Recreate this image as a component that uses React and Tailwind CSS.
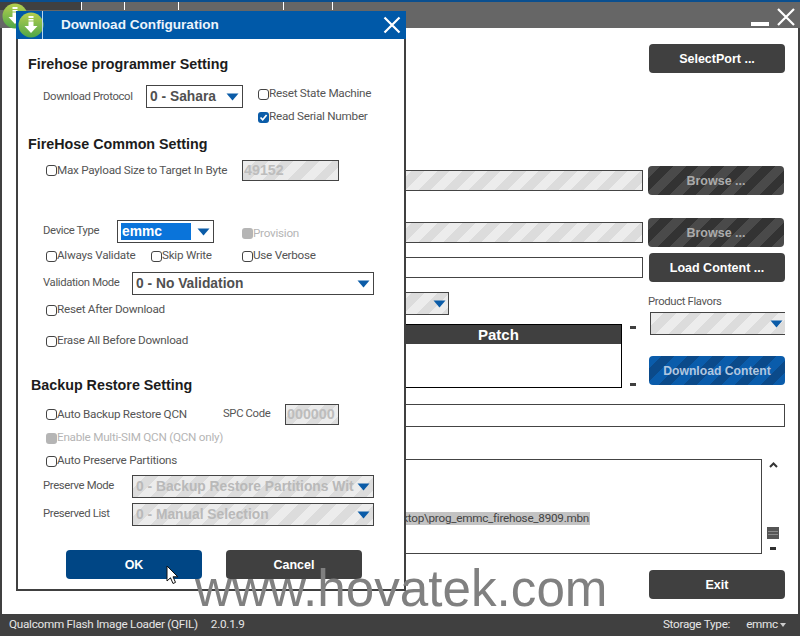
const font = "font-['Liberation_Sans',Arial,sans-serif]";
const small = "font-['Roboto','Liberation_Sans',sans-serif] text-[11.7px] tracking-[-0.25px]";
const narrow = "font-['Roboto','Liberation_Sans',sans-serif] text-[11.3px] tracking-[-0.35px]";

const stripes =
  "bg-[repeating-linear-gradient(135deg,#ececec_0px,#ececec_9px,#dcdcdc_9px,#dcdcdc_18px)]";

function Arrow({ className = "" }) {
  return (
    <svg width="13" height="8" viewBox="0 0 13 8" className={className}>
      <path d="M0.5 0.5H12.5L6.5 7.5Z" fill="#0b5ca8" />
    </svg>
  );
}

function AppIcon({ className = "" }) {
  return (
    <svg width="26" height="26" viewBox="0 0 26 26" className={className}>
      <defs>
        <linearGradient id="ga" x1="0" y1="0" x2="0" y2="1">
          <stop offset="0" stopColor="#b5cf4e" />
          <stop offset="1" stopColor="#4ea648" />
        </linearGradient>
      </defs>
      <circle cx="13" cy="13" r="12.5" fill="url(#ga)" />
      <path d="M10.5 4h5v2h-5zM10.5 7h5v1.5h-5zM10.5 9.5h5V14h4l-6.5 7-6.5-7h4z" fill="#ffffff" />
    </svg>
  );
}

function Check({ label, checked, disabled, className = "" }) {
  return (
    <div className={`flex h-4 items-center ${small} ${disabled ? "text-[#b5b5b5]" : "text-[#555555]"} ${className}`}>
      {checked ? (
        <span className="flex h-[11px] w-[11px] shrink-0 items-center justify-center rounded-[3px] bg-[#0b5ca8]">
          <svg width="9" height="9" viewBox="0 0 9 9">
            <path d="M1.5 4.5L3.7 6.8L7.6 2" fill="none" stroke="#ffffff" strokeWidth="1.7" />
          </svg>
        </span>
      ) : disabled ? (
        <span className="h-[11px] w-[11px] shrink-0 rounded-[3px] bg-[#b5b5b5]" />
      ) : (
        <span className="h-[11px] w-[11px] shrink-0 rounded-[3px] border border-[#444444] bg-white" />
      )}
      <span className="whitespace-nowrap">{label}</span>
    </div>
  );
}

function Heading({ children, className = "" }) {
  return <div className={`h-5 text-[14.3px] font-bold leading-5 text-[#1c1c1c] ${className}`}>{children}</div>;
}

function Label({ children, className = "" }) {
  return <div className={`whitespace-nowrap text-[#555555] ${narrow} ${className}`}>{children}</div>;
}

function Combo({ value, disabled, widthClass, highlight }) {
  return (
    <div
      className={`flex h-[23px] shrink-0 items-center border border-[#444444] pl-[3px] ${widthClass} ${disabled ? stripes : "bg-white"}`}
    >
      <div
        className={`flex-1 overflow-hidden whitespace-nowrap text-[13.8px] font-bold ${
          highlight ? "mr-[3px] h-[17px] bg-[#0a74da] pl-[1px] leading-[18px] text-white" : disabled ? "pt-[1px] text-[#b9b9b9]" : "pt-[1px] text-[#505050]"
        }`}
      >
        {value}
      </div>
      <Arrow className="mx-[3px] shrink-0" />
    </div>
  );
}

function Btn({ children, className = "", disabled }) {
  return (
    <div
      className={`flex h-[29px] w-[136px] shrink-0 items-center justify-center rounded-[4px] pt-[1px] text-[12.5px] font-bold ${
        disabled ? "text-[#ababab]" : "text-white"
      } ${className}`}
    >
      {children}
    </div>
  );
}

const darkStripes =
  "bg-[repeating-linear-gradient(135deg,#4a4a4a_0px,#4a4a4a_9px,#333333_9px,#333333_18px)]";

function Dialog() {
  return (
    <div className="absolute left-[16px] top-[11px] flex h-[580px] w-[390px] flex-col border-x-2 border-b-2 border-[#404040] bg-white">
      <div className="-mx-[2px] flex h-[28px] shrink-0 items-center bg-[#0059a8]">
        <AppIcon className="ml-[2px] shrink-0" />
        <div className="ml-[-2px] h-full w-[1px] bg-[#bcd7ef]" />
        <div className="ml-[18px] flex-1 text-[13.6px] font-bold text-[#ecf4fb]">Download Configuration</div>
        <svg width="18" height="18" viewBox="0 0 18 18" className="mr-[5px]">
          <path d="M1.5 1.5L16.5 16.5M16.5 1.5L1.5 16.5" stroke="#ffffff" strokeWidth="2.2" />
        </svg>
      </div>

      <Heading className="ml-[10px] mt-[15px]">Firehose programmer Setting</Heading>

      <div className="ml-[25px] mt-[11px] flex h-[41px] shrink-0 items-start">
        <Label className="w-[103px] pt-[4px]">Download Protocol</Label>
        <Combo value="0 - Sahara" widthClass="w-[97px]" />
        <div className="ml-[15px] flex flex-col gap-[7px] pt-[1px]">
          <Check label="Reset State Machine" />
          <Check label="Read Serial Number" checked />
        </div>
      </div>

      <Heading className="ml-[10px] mt-[8px]">FireHose Common Setting</Heading>

      <div className="ml-[28px] mt-[6px] flex h-[21px] shrink-0 items-center">
        <Check label="Max Payload Size to Target In Byte" className="w-[196px]" />
        <div className={`flex h-[21px] w-[97px] items-center border border-[#444444] pl-[1px] pt-[1px] text-[14.3px] font-bold text-[#bdbdbd] ${stripes}`}>
          49152
        </div>
      </div>

      <div className="ml-[25px] mt-[39px] flex h-[23px] shrink-0 items-center">
        <Label className="w-[74px]">Device Type</Label>
        <Combo value="emmc" widthClass="w-[97px]" highlight />
        <Check label="Provision" disabled className="ml-[28px] mt-[4px]" />
      </div>

      <div className="ml-[28px] mt-[5px] flex h-4 shrink-0 items-center">
        <Check label="Always Validate" className="w-[105px]" />
        <Check label="Skip Write" className="w-[91px]" />
        <Check label="Use Verbose" />
      </div>

      <div className="ml-[25px] mt-[8px] flex h-[23px] shrink-0 items-center">
        <Label className="w-[89px]">Validation Mode</Label>
        <Combo value="0 - No Validation" widthClass="w-[242px]" />
      </div>

      <Check label="Reset After Download" className="ml-[28px] mt-[7px] shrink-0" />
      <Check label="Erase All Before Download" className="ml-[28px] mt-[15px] shrink-0" />

      <Heading className="ml-[13px] mt-[26px]">Backup Restore Setting</Heading>

      <div className="ml-[28px] mt-[9px] flex h-[21px] shrink-0 items-center">
        <Check label="Auto Backup Restore QCN" className="w-[177px]" />
        <Label className="w-[62px]">SPC Code</Label>
        <div className={`flex h-[21px] w-[54px] items-center border border-[#444444] pl-[1px] pt-[1px] text-[14.3px] font-bold text-[#bdbdbd] ${stripes}`}>
          000000
        </div>
      </div>

      <Check label="Enable Multi-SIM QCN (QCN only)" disabled className="ml-[28px] mt-[5px] shrink-0" />
      <Check label="Auto Preserve Partitions" className="ml-[28px] mt-[7px] shrink-0" />

      <div className="ml-[25px] mt-[6px] flex h-[23px] shrink-0 items-center">
        <Label className="w-[89px]">Preserve Mode</Label>
        <Combo value="0 - Backup Restore Partitions With" widthClass="w-[242px]" disabled />
      </div>
      <div className="ml-[25px] mt-[5px] flex h-[23px] shrink-0 items-center">
        <Label className="w-[89px]">Preserved List</Label>
        <Combo value="0 - Manual Selection" widthClass="w-[242px]" disabled />
      </div>

      <div className="ml-[48px] mt-[24px] flex shrink-0 gap-[24px]">
        <Btn className="bg-[#004685]">OK</Btn>
        <Btn className="bg-[#404040]">Cancel</Btn>
      </div>

      <svg width="14" height="20" viewBox="0 0 14 20" className="absolute left-[148px] top-[554px]">
        <path d="M1 1V16L4.5 12.8L7 18.5L9.5 17.4L7 11.8H11.8Z" fill="#ffffff" stroke="#111111" strokeWidth="1" />
      </svg>
    </div>
  );
}

function MainWindow() {
  return (
    <div className="flex min-h-0 flex-1 flex-col border-x-2 border-[#404040] bg-white pl-[14px] pr-[13px]">
      <div className="mt-[16px] flex shrink-0 justify-end">
        <Btn className="bg-[#404040]">SelectPort ...</Btn>
      </div>

      <div className="mt-[93px] flex h-[29px] shrink-0 items-center">
        <div className={`h-[21px] flex-1 border border-[#444444] ${stripes}`} />
        <Btn disabled className={`ml-[5px] mr-[1px] ${darkStripes}`}>Browse ...</Btn>
      </div>
      <div className="mt-[23px] flex h-[29px] shrink-0 items-center">
        <div className={`h-[21px] flex-1 border border-[#444444] ${stripes}`} />
        <Btn disabled className={`ml-[5px] mr-[1px] ${darkStripes}`}>Browse ...</Btn>
      </div>
      <div className="mt-[6px] flex h-[29px] shrink-0 items-center">
        <div className="h-[21px] flex-1 border border-[#444444] bg-white" />
        <Btn className="ml-[6px] bg-[#404040]">Load Content ...</Btn>
      </div>

      <div className="mt-[10px] flex h-[96px] shrink-0">
        <div className="flex flex-1 flex-col">
          <div className={`flex h-[23px] w-[433px] items-center justify-end border border-[#444444] pr-[2px] ${stripes}`}>
            <Arrow />
          </div>
          <div className="mt-[9px] flex">
            <div className="h-[64px] w-[606px] border border-black bg-white">
              <div className="flex h-[19px] items-center bg-[#404040] pl-[461px] pt-[1px] text-[15px] font-bold text-white">Patch</div>
            </div>
            <div className="ml-[8px] flex h-[64px] flex-col justify-between pb-[2px] pt-[2px]">
              <div className="h-[3px] w-[6px] bg-[#404040]" />
              <div className="h-[3px] w-[6px] bg-[#404040]" />
            </div>
          </div>
        </div>
        <div className="flex w-[136px] shrink-0 flex-col">
          <div className={`ml-[-1px] mt-[3px] h-[14px] whitespace-nowrap leading-[14px] text-[#555555] ${narrow}`}>Product Flavors</div>
          <div className={`ml-[1px] mt-[3px] flex h-[23px] w-[135px] items-center justify-end border border-[#444444] border-r-0 pr-[2px] ${stripes}`}>
            <Arrow />
          </div>
          <Btn disabled className="mt-[21px] bg-[repeating-linear-gradient(135deg,#0a5cab_0px,#0a5cab_9px,#0b4a8a_9px,#0b4a8a_18px)]">
            <span className="text-[12.2px] text-[#b1c7e0]">Download Content</span>
          </Btn>
        </div>
      </div>

      <div className="mt-[16px] h-[23px] shrink-0 border border-[#444444] bg-white" />

      <div className="mt-[32px] flex h-[95px] shrink-0">
        <div className="relative flex-1 border border-[#444444] bg-white">
          <div className={`absolute right-[171px] top-[52px] flex h-[13px] items-center whitespace-nowrap bg-[#c3c3c3] pl-[14px] pr-[1px] text-[#444444] ${small}`}>
            Desktop\prog_emmc_firehose_8909.mbn
          </div>
        </div>
        <div className="relative w-[23px] shrink-0">
          <svg width="9" height="6" viewBox="0 0 9 6" className="absolute left-[7px] top-[3px]">
            <path d="M1 5L4.5 1.5L8 5" fill="none" stroke="#333333" strokeWidth="2" />
          </svg>
          <div className="absolute left-[5px] top-[68px] flex h-[12px] w-[12px] flex-col justify-center gap-[2px] bg-[#555555] px-[1px]">
            <div className="h-[1px] bg-[#8a8a8a]" />
            <div className="h-[1px] bg-[#8a8a8a]" />
          </div>
          <div className="absolute left-[8px] top-[88px] h-[3px] w-[6px] bg-[#303030]" />
        </div>
      </div>

      <div className="mt-[16px] flex shrink-0 justify-end">
        <Btn className="bg-[#404040]">Exit</Btn>
      </div>
    </div>
  );
}

export default function App() {
  return (
    <div className={`relative flex h-[636px] w-[800px] flex-col overflow-hidden bg-white ${font}`}>
      <div className="h-[2px] shrink-0 bg-[#0a4f8f]" />
      <div className="relative flex h-[26px] shrink-0 items-start bg-[#666666]">
        <div className="h-[8px] w-[81px] bg-[#404040]" />
        <div className="h-[8px] w-[1px] bg-white" />
        <div className="ml-[42px] h-[8px] w-[1px] bg-white" />
        <div className="ml-[53px] h-[8px] w-[1px] bg-white" />
        <div className="ml-[104px] h-[8px] w-[1px] bg-white" />
        <div className="ml-[48px] h-[8px] w-[1px] bg-white" />
        <div className="ml-auto flex items-center">
          <div className="mt-[19px] h-[4px] w-[18px] bg-white" />
          <svg width="18" height="18" viewBox="0 0 18 18" className="ml-[8px] mr-[5px] mt-[6px]">
            <path d="M1 1L17 17M17 1L1 17" stroke="#ffffff" strokeWidth="2.2" />
          </svg>
        </div>
        <AppIcon className="absolute left-[2px] top-[1px]" />
      </div>

      <MainWindow />

      <div className={`flex h-[22px] shrink-0 items-center bg-[#404040] pl-[9px] pr-[14px] text-[#e6e6e6] ${small}`}>
        <span>Qualcomm Flash Image Loader (QFIL)</span>
        <span className="ml-[13px]">2.0.1.9</span>
        <span className="ml-auto">Storage Type:</span>
        <span className="ml-[16px]">emmc</span>
        <svg width="6" height="4" viewBox="0 0 6 4" className="ml-[2px]">
          <path d="M0 0H6L3 4Z" fill="#cccccc" />
        </svg>
      </div>

      <Dialog />

      <div className="absolute left-[195px] top-[560px] whitespace-nowrap text-[51.2px] leading-[58px] text-[#808080]">
        www.hovatek.com
      </div>
    </div>
  );
}
